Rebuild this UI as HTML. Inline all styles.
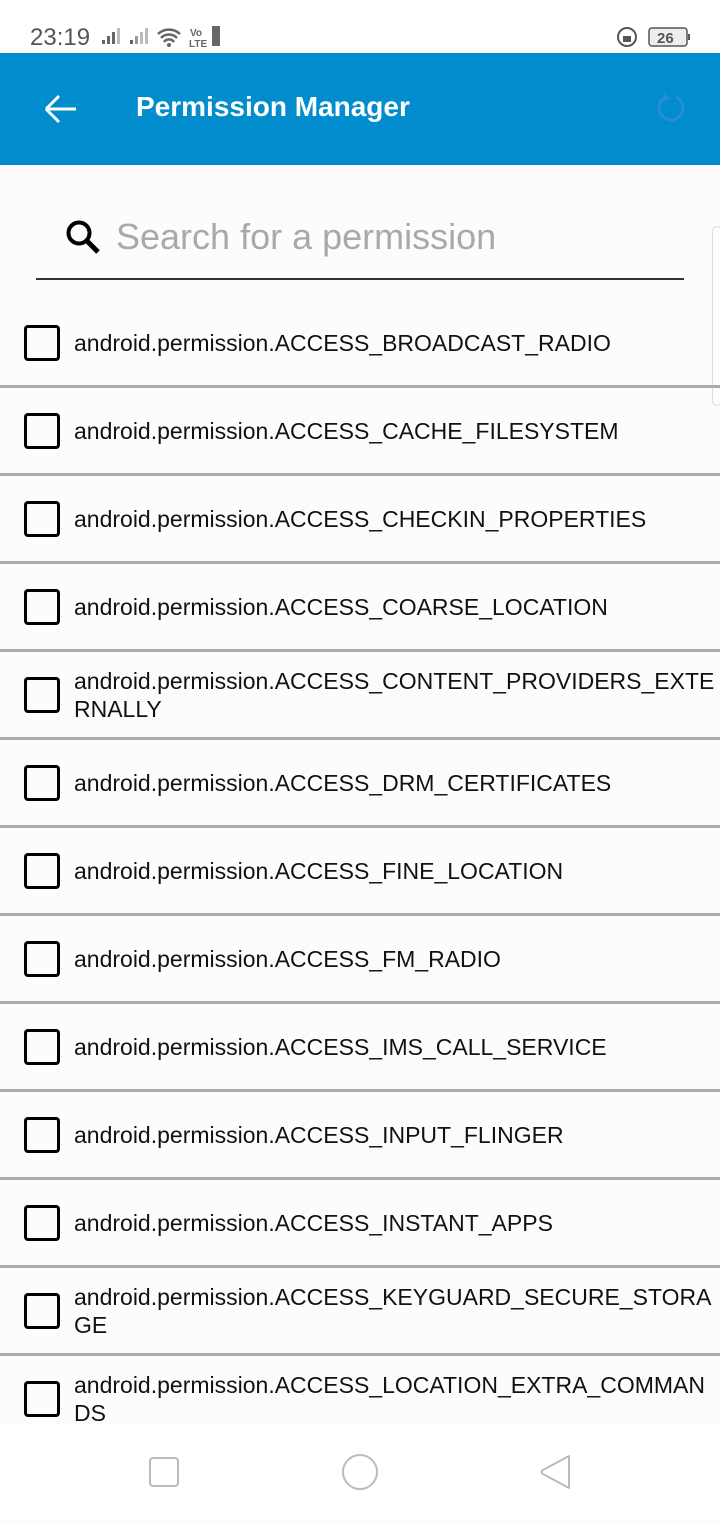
<!DOCTYPE html>
<html><head><meta charset="utf-8"><style>
*{margin:0;padding:0;box-sizing:border-box}
body{width:720px;height:1520px;position:relative;overflow:hidden;background:#fdfbfe;font-family:"Liberation Sans",Roboto,sans-serif}
.status{position:absolute;top:0;left:0;width:720px;height:53px;background:#fff}
.bar{position:absolute;top:53px;left:0;width:720px;height:112px;background:#018dcd}
.title{position:absolute;left:136px;top:91px;color:#fff;font-size:28px;font-weight:bold}
.row{position:absolute;left:0;width:720px;height:88px;border-bottom:3px solid #aaa}
.cb{position:absolute;left:24px;top:50%;margin-top:-18px;width:36px;height:36px;border:3.5px solid #000;border-radius:4px}
.t{position:absolute;left:74px;right:0;font-size:23px;line-height:28px;color:#111;white-space:nowrap;top:50%;transform:translateY(-50%)}
.nav{position:absolute;top:1424px;left:0;width:720px;height:96px;background:#fff}
</style></head><body>
<div class="status">
<div style="position:absolute;left:30px;top:24px;font-size:24px;color:#555">23:19</div>
<svg style="position:absolute;left:100px;top:26px" width="130" height="22"><g fill="#666"><rect x="2" y="14" width="3" height="4"/><rect x="7" y="10" width="3" height="8"/><rect x="12" y="6" width="3" height="12"/><rect x="17" y="2" width="3" height="16" fill="#bbb"/><rect x="30" y="14" width="3" height="4"/><rect x="35" y="10" width="3" height="8" fill="#999"/><rect x="40" y="6" width="3" height="12" fill="#bbb"/><rect x="45" y="2" width="3" height="16" fill="#bbb"/></g>
<path d="M58 8a16 16 0 0 1 22 0M61 12a11 11 0 0 1 16 0M64 16a6 6 0 0 1 10 0" stroke="#666" stroke-width="2.5" fill="none"/><circle cx="69" cy="19" r="2" fill="#666"/>
<text x="90" y="10" font-size="10" font-weight="bold" fill="#666">Vo</text><text x="89" y="21" font-size="10" font-weight="bold" fill="#666">LTE</text><rect x="112" y="0" width="8" height="20" fill="#666"/></svg>
<svg style="position:absolute;left:616px;top:26px" width="76" height="22"><circle cx="11" cy="11" r="9" stroke="#555" stroke-width="2" fill="none"/><rect x="7" y="10" width="8" height="6" fill="#555"/><rect x="33" y="2" width="38" height="18" rx="3" stroke="#555" stroke-width="1.5" fill="#eee"/><text x="41" y="17" font-size="15" font-weight="bold" fill="#555">26</text><rect x="72" y="8" width="2" height="6" fill="#555"/></svg>
</div>
<div class="bar">
<svg style="position:absolute;left:42px;top:38px" width="36" height="36"><path d="M4 18H34M4 18L17 5M4 18L17 31" stroke="#fff" stroke-width="3" fill="none"/></svg>
<svg style="position:absolute;left:654px;top:38px" width="34" height="34"><path d="M22 6A12 12 0 1 1 12 6" stroke="#2a8ae0" stroke-width="3" fill="none"/><path d="M10 2L14 7L9 9" stroke="#2a8ae0" stroke-width="2.5" fill="none"/></svg>
</div>
<div class="title">Permission Manager</div>
<svg style="position:absolute;left:64px;top:218px" width="40" height="40"><circle cx="15" cy="15" r="10.5" stroke="#000" stroke-width="4" fill="none"/><path d="M23 23L34 34" stroke="#000" stroke-width="5"/></svg>
<div style="position:absolute;left:116px;top:216px;font-size:36px;color:#a9a9a9">Search for a permission</div>
<div style="position:absolute;left:36px;top:278px;width:648px;height:1.5px;background:#333"></div>
<div style="position:absolute;left:712px;top:226px;width:10px;height:180px;border:1px solid #ddd;border-radius:6px"></div>
<div style="position:absolute;top:300px;left:0;width:720px;height:1124px;overflow:hidden">
<div class="row" style="top:0"><div class="cb"></div><div class="t">android.permission.ACCESS_BROADCAST_RADIO</div></div>
<div class="row" style="top:88px"><div class="cb"></div><div class="t">android.permission.ACCESS_CACHE_FILESYSTEM</div></div>
<div class="row" style="top:176px"><div class="cb"></div><div class="t">android.permission.ACCESS_CHECKIN_PROPERTIES</div></div>
<div class="row" style="top:264px"><div class="cb"></div><div class="t">android.permission.ACCESS_COARSE_LOCATION</div></div>
<div class="row" style="top:352px"><div class="cb"></div><div class="t">android.permission.ACCESS_CONTENT_PROVIDERS_EXTE<br>RNALLY</div></div>
<div class="row" style="top:440px"><div class="cb"></div><div class="t">android.permission.ACCESS_DRM_CERTIFICATES</div></div>
<div class="row" style="top:528px"><div class="cb"></div><div class="t">android.permission.ACCESS_FINE_LOCATION</div></div>
<div class="row" style="top:616px"><div class="cb"></div><div class="t">android.permission.ACCESS_FM_RADIO</div></div>
<div class="row" style="top:704px"><div class="cb"></div><div class="t">android.permission.ACCESS_IMS_CALL_SERVICE</div></div>
<div class="row" style="top:792px"><div class="cb"></div><div class="t">android.permission.ACCESS_INPUT_FLINGER</div></div>
<div class="row" style="top:880px"><div class="cb"></div><div class="t">android.permission.ACCESS_INSTANT_APPS</div></div>
<div class="row" style="top:968px"><div class="cb"></div><div class="t">android.permission.ACCESS_KEYGUARD_SECURE_STORA<br>GE</div></div>
<div class="row" style="top:1056px"><div class="cb"></div><div class="t">android.permission.ACCESS_LOCATION_EXTRA_COMMAN<br>DS</div></div>
</div>
<div class="nav">
<svg width="720" height="96"><rect x="150" y="34" width="28" height="28" rx="3" stroke="#bbb" stroke-width="2" fill="none"/><ellipse cx="360" cy="48" rx="17" ry="17" stroke="#bbb" stroke-width="2" fill="none"/><path d="M569 32L543 46Q540 48 543 50L569 64Z" stroke="#bbb" stroke-width="2" fill="none" stroke-linejoin="round"/></svg>
</div>
</body></html>
